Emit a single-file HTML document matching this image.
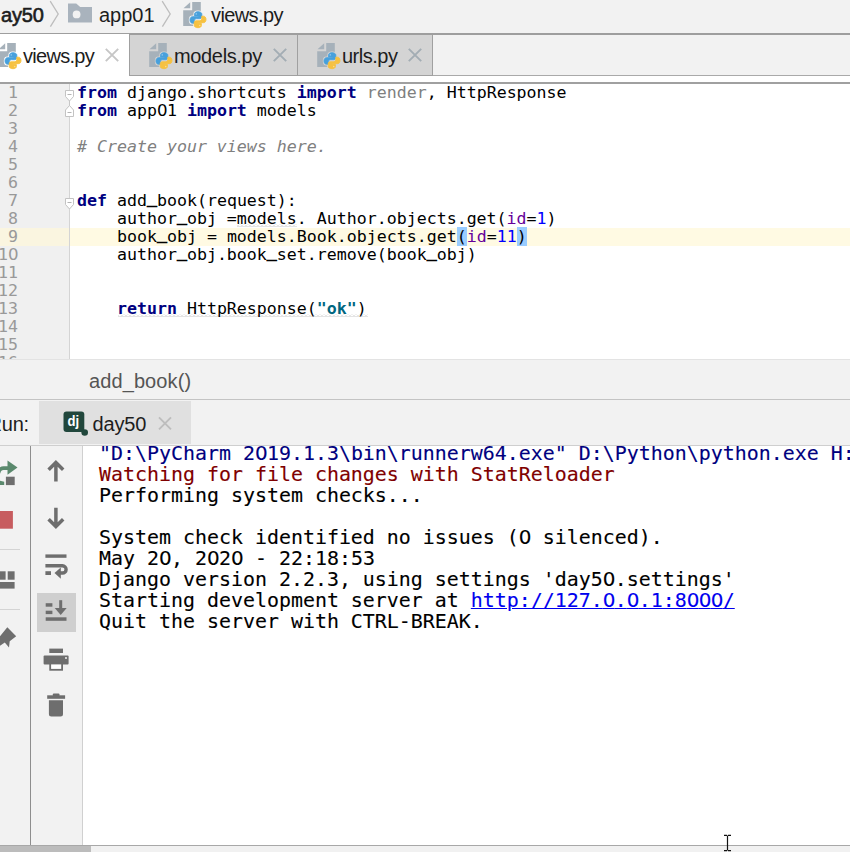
<!DOCTYPE html>
<html>
<head>
<meta charset="utf-8">
<title>views.py</title>
<style>
html,body{margin:0;padding:0;}
body{width:850px;height:852px;overflow:hidden;position:relative;background:#f2f2f2;font-family:"Liberation Sans",sans-serif;color:#1a1a1a;}
.abs{position:absolute;}
.ui{font-family:"Liberation Sans",sans-serif;font-size:20px;letter-spacing:-0.3px;white-space:pre;line-height:24px;color:#1d1d1d;}
/* top breadcrumb */
#nav{left:0;top:0;width:850px;height:33px;background:#f2f2f2;}
#navline{left:0;top:33px;width:850px;height:2px;background:#9e9e9e;}
/* tabs */
#tabrow{left:0;top:35px;width:850px;height:42px;background:#f2f2f2;}
#tabbottom{left:0;top:75px;width:850px;height:1px;background:#a9a9a9;}
#tabstrip{left:0;top:76px;width:850px;height:6px;background:#ffffff;}
#edline{left:0;top:82px;width:850px;height:2px;background:#a0a0a0;}
.tab{top:35px;height:40px;background:#d4d4d4;border-left:1px solid #a0a0a0;border-bottom:1px solid #a0a0a0;box-sizing:content-box;}
#tab1{left:0;top:34px;width:129px;height:48px;background:#fff;}
/* editor */
#editor{left:0;top:84px;width:850px;height:275px;background:#fff;overflow:hidden;}
#gutter{left:0;top:0;width:69px;height:275px;background:#f0f0f0;border-right:1px solid #d4d4d4;}
#caretrow{left:0;top:144px;width:850px;height:18px;background:#fffae3;}
#caretrowg{left:0;top:144px;width:69px;height:18px;background:#faf5e0;}
.mono{font-family:"DejaVu Sans Mono","Liberation Mono",monospace;}
.ln{left:-12px;width:30px;text-align:right;font-size:16.6px;line-height:18px;height:18px;color:#999999;white-space:pre;}
.cl{left:77px;font-size:16.6px;line-height:18px;height:18px;color:#000;white-space:pre;}
.z{font-family:"DejaVu Sans","Liberation Sans",sans-serif;letter-spacing:-0.0342em;}
.u{position:relative;top:-3px;-webkit-text-stroke:0.7px;}
.kw{color:#000080;font-weight:bold;}
.cm{color:#808080;font-style:italic;}
.un{color:#808080;}
.nu{color:#0000ff;}
.pa{color:#660099;}
.st{color:#00667f;font-weight:bold;}
.hl{background:#99ccff;}
/* editor breadcrumb */
#crumb{left:0;top:359px;width:850px;height:40px;background:#f2f2f2;border-top:1px solid #e3e3e3;box-sizing:border-box;}
#crumbline{left:0;top:399px;width:850px;height:1px;background:#c4c4c4;}
/* run bar */
#runbar{left:0;top:400px;width:850px;height:45px;background:#f2f2f2;}
#runtab{left:39px;top:401px;width:152px;height:43px;background:#e0e0e0;}
#runline{left:0;top:445px;width:850px;height:1px;background:#cfcfcf;}
/* console */
#left1{left:0;top:446px;width:30px;height:399px;background:#f2f2f2;}
#sepA{left:29.7px;top:446px;width:1.6px;height:399px;background:#8e8e8e;}
#left2{left:31px;top:446px;width:51px;height:399px;background:#f2f2f2;}
#sepB{left:82px;top:446px;width:1px;height:399px;background:#d0d0d0;}
#console{left:83px;top:446px;width:767px;height:399px;background:#fff;overflow:hidden;}
.co{left:16px;-webkit-text-stroke:0.12px;font-size:19.93px;line-height:21px;height:21px;color:#000;white-space:pre;}
.c1{color:#00007f;}
.c2{color:#7f0000;}
.lk{color:#0000ee;text-decoration:underline;}
#botline{left:0;top:845px;width:850px;height:1px;background:#a8a8a8;}
#bot{left:0;top:846px;width:850px;height:6px;background:#f1f1f1;}
#botthumb{left:0;top:846px;width:91px;height:6px;background:#bcbcbc;}
</style>
</head>
<body>
<!-- top nav -->
<div id="nav" class="abs"></div>
<div id="navline" class="abs"></div>
<div class="abs ui" style="left:1px;top:3px;-webkit-text-stroke:0.6px;letter-spacing:-0.15px">ay50</div>
<div class="abs ui" style="left:99px;top:3px;letter-spacing:0">app01</div>
<div class="abs ui" style="left:211px;top:3px;letter-spacing:-0.6px">views.py</div>

<svg class="abs" style="left:49px;top:0px" width="12" height="28" viewBox="0 0 12 28"><path d="M1.2 1.2L9.2 14L1.4 26.6" stroke="#bdbdbd" stroke-width="1.3" fill="none"/></svg>
<svg class="abs" style="left:161px;top:0px" width="12" height="28" viewBox="0 0 12 28"><path d="M1.2 1.2L9.2 14L1.4 26.6" stroke="#bdbdbd" stroke-width="1.3" fill="none"/></svg>
<svg class="abs" style="left:68px;top:3px" width="25" height="20" viewBox="0 0 25 20"><path fill-rule="evenodd" d="M0 0.5H8.2L12.2 4H24V19.5H0Z M8.6 7.5A3.9 3.9 0 1 0 8.6 15.3A3.9 3.9 0 1 0 8.6 7.5Z" fill="#a9b3bd"/></svg>
<svg class="abs" style="left:183px;top:2px;overflow:visible" width="26" height="28" viewBox="0 0 26 28">
<polygon points="0.5,6.3 7.2,0.2 7.2,6.3" fill="#a6b1ba"/>
<polygon points="9.2,0 17.8,0 17.8,24 0.2,24 0.2,8.3 9.2,8.3" fill="#a6b1ba"/>
<g transform="translate(7,9.7)">
<path d="M7.9 0C5.6 0 4.6 1 4.6 2.4V4.2H8.2V5H2.6C1 5 0 6.3 0 8.2C0 10.2 1 11.5 2.6 11.5H4.2V9.4C4.2 7.9 5.3 6.9 6.7 6.9H9.9C11 6.9 11.8 6 11.8 5V2.4C11.8 1 10.4 0 7.9 0Z" fill="none" stroke="#f2f2f2" stroke-width="2.4"/>
<path d="M8.1 16C10.4 16 11.4 15 11.4 13.6V11.8H7.8V11H13.4C15 11 16 9.7 16 7.8C16 5.8 15 4.5 13.4 4.5H11.8V6.6C11.8 8.1 10.7 9.1 9.3 9.1H6.1C5 9.1 4.2 10 4.2 11V13.6C4.2 15 5.6 16 8.1 16Z" fill="none" stroke="#f2f2f2" stroke-width="2.4"/>
<path d="M7.9 0C5.6 0 4.6 1 4.6 2.4V4.2H8.2V5H2.6C1 5 0 6.3 0 8.2C0 10.2 1 11.5 2.6 11.5H4.2V9.4C4.2 7.9 5.3 6.9 6.7 6.9H9.9C11 6.9 11.8 6 11.8 5V2.4C11.8 1 10.4 0 7.9 0Z" fill="#47a0dc" stroke="#47a0dc" stroke-width="0.9"/>
<path d="M8.1 16C10.4 16 11.4 15 11.4 13.6V11.8H7.8V11H13.4C15 11 16 9.7 16 7.8C16 5.8 15 4.5 13.4 4.5H11.8V6.6C11.8 8.1 10.7 9.1 9.3 9.1H6.1C5 9.1 4.2 10 4.2 11V13.6C4.2 15 5.6 16 8.1 16Z" fill="#f6c140" stroke="#f6c140" stroke-width="0.9"/>
<circle cx="6.3" cy="2.2" r="0.8" fill="#8cc4ec"/>
<circle cx="9.7" cy="13.8" r="0.8" fill="#fbdc8a"/>
</g>
</svg>
<!-- tabs -->
<div id="tabrow" class="abs"></div>
<div id="tabbottom" class="abs"></div>
<div id="tabstrip" class="abs"></div>
<div id="tab1" class="abs"></div>
<div class="abs tab" style="left:129px;width:167px;"></div>
<div class="abs tab" style="left:297px;width:134px;border-right:1px solid #a0a0a0;"></div>
<div id="edline" class="abs"></div>
<div class="abs ui" style="left:23px;top:44px;letter-spacing:-0.7px">views.py</div>
<div class="abs ui" style="left:174px;top:44px;letter-spacing:-0.35px">models.py</div>
<div class="abs ui" style="left:342px;top:44px;letter-spacing:-0.5px">urls.py</div>

<svg class="abs" style="left:-2.5px;top:43px;overflow:visible" width="26" height="28" viewBox="0 0 26 28">
<polygon points="0.5,6.3 7.2,0.2 7.2,6.3" fill="#a6b1ba"/>
<polygon points="9.2,0 17.8,0 17.8,24 0.2,24 0.2,8.3 9.2,8.3" fill="#a6b1ba"/>
<g transform="translate(7,9.7)">
<path d="M7.9 0C5.6 0 4.6 1 4.6 2.4V4.2H8.2V5H2.6C1 5 0 6.3 0 8.2C0 10.2 1 11.5 2.6 11.5H4.2V9.4C4.2 7.9 5.3 6.9 6.7 6.9H9.9C11 6.9 11.8 6 11.8 5V2.4C11.8 1 10.4 0 7.9 0Z" fill="none" stroke="#ffffff" stroke-width="2.4"/>
<path d="M8.1 16C10.4 16 11.4 15 11.4 13.6V11.8H7.8V11H13.4C15 11 16 9.7 16 7.8C16 5.8 15 4.5 13.4 4.5H11.8V6.6C11.8 8.1 10.7 9.1 9.3 9.1H6.1C5 9.1 4.2 10 4.2 11V13.6C4.2 15 5.6 16 8.1 16Z" fill="none" stroke="#ffffff" stroke-width="2.4"/>
<path d="M7.9 0C5.6 0 4.6 1 4.6 2.4V4.2H8.2V5H2.6C1 5 0 6.3 0 8.2C0 10.2 1 11.5 2.6 11.5H4.2V9.4C4.2 7.9 5.3 6.9 6.7 6.9H9.9C11 6.9 11.8 6 11.8 5V2.4C11.8 1 10.4 0 7.9 0Z" fill="#47a0dc" stroke="#47a0dc" stroke-width="0.9"/>
<path d="M8.1 16C10.4 16 11.4 15 11.4 13.6V11.8H7.8V11H13.4C15 11 16 9.7 16 7.8C16 5.8 15 4.5 13.4 4.5H11.8V6.6C11.8 8.1 10.7 9.1 9.3 9.1H6.1C5 9.1 4.2 10 4.2 11V13.6C4.2 15 5.6 16 8.1 16Z" fill="#f6c140" stroke="#f6c140" stroke-width="0.9"/>
<circle cx="6.3" cy="2.2" r="0.8" fill="#8cc4ec"/>
<circle cx="9.7" cy="13.8" r="0.8" fill="#fbdc8a"/>
</g>
</svg>
<svg class="abs" style="left:149px;top:43px;overflow:visible" width="26" height="28" viewBox="0 0 26 28">
<polygon points="0.5,6.3 7.2,0.2 7.2,6.3" fill="#a6b1ba"/>
<polygon points="9.2,0 17.8,0 17.8,24 0.2,24 0.2,8.3 9.2,8.3" fill="#a6b1ba"/>
<g transform="translate(7,9.7)">
<path d="M7.9 0C5.6 0 4.6 1 4.6 2.4V4.2H8.2V5H2.6C1 5 0 6.3 0 8.2C0 10.2 1 11.5 2.6 11.5H4.2V9.4C4.2 7.9 5.3 6.9 6.7 6.9H9.9C11 6.9 11.8 6 11.8 5V2.4C11.8 1 10.4 0 7.9 0Z" fill="none" stroke="#d4d4d4" stroke-width="2.4"/>
<path d="M8.1 16C10.4 16 11.4 15 11.4 13.6V11.8H7.8V11H13.4C15 11 16 9.7 16 7.8C16 5.8 15 4.5 13.4 4.5H11.8V6.6C11.8 8.1 10.7 9.1 9.3 9.1H6.1C5 9.1 4.2 10 4.2 11V13.6C4.2 15 5.6 16 8.1 16Z" fill="none" stroke="#d4d4d4" stroke-width="2.4"/>
<path d="M7.9 0C5.6 0 4.6 1 4.6 2.4V4.2H8.2V5H2.6C1 5 0 6.3 0 8.2C0 10.2 1 11.5 2.6 11.5H4.2V9.4C4.2 7.9 5.3 6.9 6.7 6.9H9.9C11 6.9 11.8 6 11.8 5V2.4C11.8 1 10.4 0 7.9 0Z" fill="#47a0dc" stroke="#47a0dc" stroke-width="0.9"/>
<path d="M8.1 16C10.4 16 11.4 15 11.4 13.6V11.8H7.8V11H13.4C15 11 16 9.7 16 7.8C16 5.8 15 4.5 13.4 4.5H11.8V6.6C11.8 8.1 10.7 9.1 9.3 9.1H6.1C5 9.1 4.2 10 4.2 11V13.6C4.2 15 5.6 16 8.1 16Z" fill="#f6c140" stroke="#f6c140" stroke-width="0.9"/>
<circle cx="6.3" cy="2.2" r="0.8" fill="#8cc4ec"/>
<circle cx="9.7" cy="13.8" r="0.8" fill="#fbdc8a"/>
</g>
</svg>
<svg class="abs" style="left:316.8px;top:43px;overflow:visible" width="26" height="28" viewBox="0 0 26 28">
<polygon points="0.5,6.3 7.2,0.2 7.2,6.3" fill="#a6b1ba"/>
<polygon points="9.2,0 17.8,0 17.8,24 0.2,24 0.2,8.3 9.2,8.3" fill="#a6b1ba"/>
<g transform="translate(7,9.7)">
<path d="M7.9 0C5.6 0 4.6 1 4.6 2.4V4.2H8.2V5H2.6C1 5 0 6.3 0 8.2C0 10.2 1 11.5 2.6 11.5H4.2V9.4C4.2 7.9 5.3 6.9 6.7 6.9H9.9C11 6.9 11.8 6 11.8 5V2.4C11.8 1 10.4 0 7.9 0Z" fill="none" stroke="#d4d4d4" stroke-width="2.4"/>
<path d="M8.1 16C10.4 16 11.4 15 11.4 13.6V11.8H7.8V11H13.4C15 11 16 9.7 16 7.8C16 5.8 15 4.5 13.4 4.5H11.8V6.6C11.8 8.1 10.7 9.1 9.3 9.1H6.1C5 9.1 4.2 10 4.2 11V13.6C4.2 15 5.6 16 8.1 16Z" fill="none" stroke="#d4d4d4" stroke-width="2.4"/>
<path d="M7.9 0C5.6 0 4.6 1 4.6 2.4V4.2H8.2V5H2.6C1 5 0 6.3 0 8.2C0 10.2 1 11.5 2.6 11.5H4.2V9.4C4.2 7.9 5.3 6.9 6.7 6.9H9.9C11 6.9 11.8 6 11.8 5V2.4C11.8 1 10.4 0 7.9 0Z" fill="#47a0dc" stroke="#47a0dc" stroke-width="0.9"/>
<path d="M8.1 16C10.4 16 11.4 15 11.4 13.6V11.8H7.8V11H13.4C15 11 16 9.7 16 7.8C16 5.8 15 4.5 13.4 4.5H11.8V6.6C11.8 8.1 10.7 9.1 9.3 9.1H6.1C5 9.1 4.2 10 4.2 11V13.6C4.2 15 5.6 16 8.1 16Z" fill="#f6c140" stroke="#f6c140" stroke-width="0.9"/>
<circle cx="6.3" cy="2.2" r="0.8" fill="#8cc4ec"/>
<circle cx="9.7" cy="13.8" r="0.8" fill="#fbdc8a"/>
</g>
</svg>
<svg class="abs" style="left:104.2px;top:47.3px" width="16" height="16" viewBox="0 0 16 16"><path d="M1.8 1.8L14.2 14.2M14.2 1.8L1.8 14.2" stroke="#c6c6c6" stroke-width="1.9" fill="none"/></svg>
<svg class="abs" style="left:272px;top:47.3px" width="16" height="16" viewBox="0 0 16 16"><path d="M1.8 1.8L14.2 14.2M14.2 1.8L1.8 14.2" stroke="#a3adb4" stroke-width="1.9" fill="none"/></svg>
<svg class="abs" style="left:407px;top:47.3px" width="16" height="16" viewBox="0 0 16 16"><path d="M1.8 1.8L14.2 14.2M14.2 1.8L1.8 14.2" stroke="#a3adb4" stroke-width="1.9" fill="none"/></svg>
<!-- editor -->
<div id="editor" class="abs">
  <div id="caretrow" class="abs"></div>
  <div id="gutter" class="abs"></div>
  <div id="caretrowg" class="abs"></div>

  <svg class="abs" style="left:60px;top:0px" width="20" height="140" viewBox="0 0 20 140">
    <path d="M9.5 17V21.5" stroke="#c6c6c6" stroke-width="1" fill="none"/>
    <path d="M5.5 6.5H13.5V12.5L9.5 17L5.5 12.5Z" fill="#fff" stroke="#c3c3c3" stroke-width="1"/>
    <path d="M7.5 10.5H11.5" stroke="#b5b5b5" stroke-width="1"/>
    <path d="M5.5 32.500H13.5V26L9.5 21.5L5.5 26Z" fill="#fff" stroke="#c3c3c3" stroke-width="1"/>
    <path d="M7.500 28.500H11.5" stroke="#b5b5b5" stroke-width="1"/>
    <path d="M5.5 114.5H13.5V120.5L9.5 125L5.5 120.5Z" fill="#fff" stroke="#c3c3c3" stroke-width="1"/>
    <path d="M7.5 118.5H11.5" stroke="#b5b5b5" stroke-width="1"/>
  </svg>
  <svg class="abs" style="left:0;top:0" width="850" height="275" viewBox="0 0 850 275">
    <defs><pattern id="wv" width="4" height="3" patternUnits="userSpaceOnUse"><path d="M0 2.5L2 0.5L4 2.5" stroke="#c9c9c9" stroke-width="1" fill="none"/></pattern></defs>
    <rect x="237" y="140" width="60" height="3" fill="url(#wv)"/>
    <rect x="118" y="230" width="250" height="3" fill="url(#wv)"/>
  </svg>
  <div class="abs ln mono" style="top:0px">1</div>
  <div class="abs ln mono" style="top:18px">2</div>
  <div class="abs ln mono" style="top:36px">3</div>
  <div class="abs ln mono" style="top:54px">4</div>
  <div class="abs ln mono" style="top:72px">5</div>
  <div class="abs ln mono" style="top:90px">6</div>
  <div class="abs ln mono" style="top:108px">7</div>
  <div class="abs ln mono" style="top:126px">8</div>
  <div class="abs ln mono" style="top:144px">9</div>
  <div class="abs ln mono" style="top:162px">1<span class="z">0</span></div>
  <div class="abs ln mono" style="top:180px">11</div>
  <div class="abs ln mono" style="top:198px">12</div>
  <div class="abs ln mono" style="top:216px">13</div>
  <div class="abs ln mono" style="top:234px">14</div>
  <div class="abs ln mono" style="top:252px">15</div>
  <div class="abs ln mono" style="top:270px">16</div>

  <div class="abs cl mono" style="top:0px"><span class="kw">from</span> django.shortcuts <span class="kw">import</span> <span class="un">render</span>, HttpResponse</div>
  <div class="abs cl mono" style="top:18px"><span class="kw">from</span> app<span class="z">0</span>1 <span class="kw">import</span> models</div>
  <div class="abs cl mono" style="top:54px"><span class="cm"># Create your views here.</span></div>
  <div class="abs cl mono" style="top:108px"><span class="kw">def</span> add<span class="u">_</span>book(request):</div>
  <div class="abs cl mono" style="top:126px">    author<span class="u">_</span>obj =models. Author.objects.get(<span class="pa">id</span>=<span class="nu">1</span>)</div>
  <div class="abs cl mono" style="top:144px">    book<span class="u">_</span>obj = models.Book.objects.get<span class="hl">(</span><span class="pa">id</span>=<span class="nu">11</span><span class="hl">)</span></div>
  <div class="abs cl mono" style="top:162px">    author<span class="u">_</span>obj.book<span class="u">_</span>set.remove(book<span class="u">_</span>obj)</div>
  <div class="abs cl mono" style="top:216px">    <span class="kw">return</span> HttpResponse(<span class="st">"ok"</span>)</div>
</div>

<!-- editor breadcrumb -->
<div id="crumb" class="abs"></div>
<div id="crumbline" class="abs"></div>
<div class="abs ui" style="left:89px;top:369px;color:#555;letter-spacing:0.1px">add_book()</div>

<!-- run bar -->
<div id="runbar" class="abs"></div>
<div id="runtab" class="abs"></div>
<div id="runline" class="abs"></div>
<div class="abs ui" style="left:-12.5px;top:412px;letter-spacing:-0.2px">Run:</div>
<div class="abs ui" style="left:92.5px;top:412px;letter-spacing:-0.15px">day50</div>


<svg class="abs" style="left:60px;top:408px" width="32" height="32" viewBox="60 408 32 32">
  <circle cx="84.6" cy="432.4" r="4.4" fill="#e0e0e0"/>
  <rect x="63.5" y="411.5" width="20.8" height="20.4" rx="3" ry="3" fill="#21473c"/>
  <circle cx="84.700" cy="432.500" r="3.300" fill="#21473c"/>
  <text x="67.600" y="425.500" font-family="Liberation Sans, sans-serif" font-weight="bold" font-size="14.500" fill="#ffffff" textLength="11.600" lengthAdjust="spacingAndGlyphs">dj</text>
</svg>
<svg class="abs" style="left:157px;top:415px" width="16" height="16" viewBox="0 0 16 16"><path d="M2 2.400L14 14.400M14 2.400L2 14.400" stroke="#bdbdbd" stroke-width="1.9" fill="none"/></svg>
<!-- console -->
<div id="left1" class="abs"></div>
<div id="sepA" class="abs"></div>
<div id="left2" class="abs"></div>
<div id="sepB" class="abs"></div>
<div id="console" class="abs">
  <div class="abs co mono c1" style="top:-3px">"D:\PyCharm 2<span class="z">0</span>19.1.3\bin\runnerw64.exe" D:\Python\python.exe H:/day5<span class="z">0</span>/manage.py runserver 8<span class="z">0</span><span class="z">0</span><span class="z">0</span></div>
  <div class="abs co mono c2" style="top:18px">Watching for file changes with StatReloader</div>
  <div class="abs co mono" style="top:39px">Performing system checks...</div>
  <div class="abs co mono" style="top:81px">System check identified no issues (<span class="z">0</span> silenced).</div>
  <div class="abs co mono" style="top:102px">May 2<span class="z">0</span>, 2<span class="z">0</span>2<span class="z">0</span> - 22:18:53</div>
  <div class="abs co mono" style="top:123px">Django version 2.2.3, using settings 'day5<span class="z">0</span>.settings'</div>
  <div class="abs co mono" style="top:144px">Starting development server at <span class="lk">http://127.<span class="z">0</span>.<span class="z">0</span>.1:8<span class="z">0</span><span class="z">0</span><span class="z">0</span>/</span></div>
  <div class="abs co mono" style="top:165px">Quit the server with CTRL-BREAK.</div>
</div>

<!-- left strip icons -->
<svg class="abs" style="left:0;top:446px" width="30" height="399" viewBox="0 446 30 399">
  <path d="M9 468.200H3.500Q-0.500 468.200 -1.600 473" stroke="#5a896d" stroke-width="3.800" fill="none"/>
  <polygon points="7.500,460.500 17.500,467.600 7.500,474.800" fill="#5a896d"/>
  <path d="M-2 480.200L4.200 481.800V485H-2Z" fill="#5a896d"/>
  <rect x="5.900" y="476.700" width="8.800" height="8.400" fill="#6e6e6e"/>
  <rect x="-2" y="511" width="14.900" height="17.700" fill="#c75c5f"/>
  <rect x="0" y="549" width="20" height="1" fill="#d4d4d4"/>
  <rect x="-2" y="571.300" width="7.600" height="8.400" fill="#6e6e6e"/>
  <rect x="7.700" y="571.300" width="6.900" height="8.400" fill="#6e6e6e"/>
  <rect x="-2" y="582" width="16.600" height="6.600" fill="#6e6e6e"/>
  <rect x="0" y="609" width="20" height="1" fill="#d4d4d4"/>
  <polygon points="7.300,627.300 16.200,636.200 9.700,641.300 9,647.600 4.800,642.600 -1,646.500 -1,637.500" fill="#6e6e6e"/>
</svg>
<!-- console toolbar icons -->
<svg class="abs" style="left:32px;top:446px" width="50" height="399" viewBox="32 446 50 399">
  <rect x="37" y="593" width="39" height="39" fill="#cfcfcf"/>
  <path d="M55.900 481.600V462.500M48.600 469.700L55.900 462.400L63.200 469.700" stroke="#6e6e6e" stroke-width="3.5" fill="none"/>
  <path d="M55.900 507.800V526.500M48.600 519.300L55.900 526.600L63.200 519.300" stroke="#6e6e6e" stroke-width="3.5" fill="none"/>
  <rect x="45.400" y="554.400" width="21.100" height="3.400" fill="#6e6e6e"/>
  <path d="M45.400 565.800H62.500A3.600 3.600 0 0 1 62.500 573H60" stroke="#6e6e6e" stroke-width="3.400" fill="none"/>
  <polygon points="54.500,573 60.800,567.500 60.800,578.800" fill="#6e6e6e"/>
  <rect x="45.400" y="571.200" width="5.600" height="3.800" fill="#6e6e6e"/>
  <rect x="45.700" y="603.200" width="6.700" height="3.500" fill="#6e6e6e"/>
  <rect x="45.700" y="610.700" width="6.700" height="3.400" fill="#6e6e6e"/>
  <rect x="45.700" y="617.300" width="20.800" height="3.500" fill="#6e6e6e"/>
  <path d="M60.700 600.200V611" stroke="#6e6e6e" stroke-width="3" fill="none"/>
  <polygon points="54.700,608 66.700,608 60.700,615" fill="#6e6e6e"/>
  <rect x="49.300" y="648.600" width="13.700" height="4.400" fill="#6e6e6e"/>
  <rect x="43.600" y="655.600" width="25" height="8.800" rx="1" fill="#6e6e6e"/>
  <rect x="50.200" y="663.500" width="11.900" height="6.300" fill="#ffffff" stroke="#6e6e6e" stroke-width="1.800"/>
  <circle cx="66" cy="658" r="0.900" fill="#ffffff"/>
  <rect x="52.800" y="693.600" width="6.700" height="3" rx="1" fill="#6e6e6e"/>
  <rect x="47.200" y="695.300" width="17.900" height="3.500" fill="#6e6e6e"/>
  <path d="M48.900 700.200H63V713.900A2.500 2.500 0 0 1 60.500 716.400H51.400A2.500 2.500 0 0 1 48.900 713.900Z" fill="#6e6e6e"/>
</svg>

<div id="botline" class="abs"></div>
<div id="bot" class="abs"></div>
<div id="botthumb" class="abs"></div>
<!-- I-beam cursor -->
<svg class="abs" style="left:720px;top:830px" width="16" height="22" viewBox="720 830 16 22">
  <path d="M724 835.400H727M728 835.400H731M727.500 835.600V850.400M724 850.600H727M728 850.600H731" stroke="#111" stroke-width="1.200" fill="none"/>
</svg>
</body>
</html>
